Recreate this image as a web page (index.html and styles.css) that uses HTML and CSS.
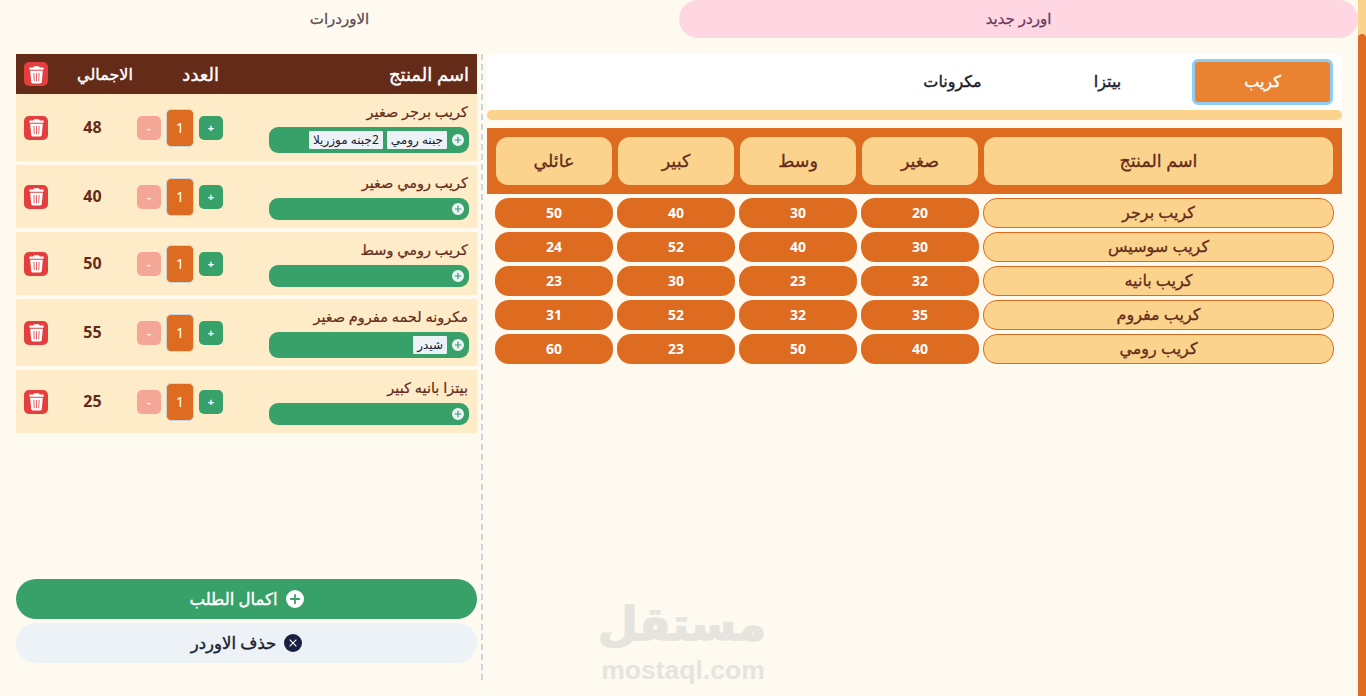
FILE: index.html
```html
<!DOCTYPE html>
<html lang="ar" dir="rtl">
<head>
<meta charset="utf-8">
<title>اوردر جديد</title>
<link rel="stylesheet" href="styles.css">
</head>
<body>
<svg class="defs" width="0" height="0" aria-hidden="true">
  <symbol id="plus" viewBox="0 0 24 24"><path fill="currentColor" fill-rule="evenodd" d="M12 0a12 12 0 1 1 0 24a12 12 0 0 1 0-24ZM10.800 5.500v5.300h-5.300v2.400h5.300v5.300h2.400v-5.300h5.300v-2.400h-5.300v-5.300Z"/></symbol>
  <symbol id="trash" viewBox="0 0 24 24"><path fill="#fff" fill-rule="evenodd" d="M9 1.500h6l1 1.800h5v2.700H3V3.300h5ZM4 7.200h16l-1.300 14.300A2 2 0 0 1 16.700 23.300H7.300a2 2 0 0 1-2-1.800ZM8.200 10l.4 10.500h1L9.300 10ZM11.500 10v10.500h1V10ZM14.700 10l-.3 10.500h1L15.800 10Z"/></symbol>
</svg>
<div class="page">
  <div class="content">
    <nav class="top-tabs">
      <div class="top-tab active">اوردر جديد</div>
      <div class="top-tab">الاوردرات</div>
    </nav>
    <main class="layout">
      <section class="menu">
        <div class="cats">
          <button class="cat selected">كريب</button>
          <button class="cat">بيتزا</button>
          <button class="cat">مكرونات</button>
        </div>
        <div class="strip"></div>
        <div class="thead">
          <div class="th">اسم المنتج</div><div class="th">صغير</div><div class="th">وسط</div><div class="th">كبير</div><div class="th">عائلي</div>
        </div>
        <div class="tbody">
          <div class="tr"><div class="td-name">كريب برجر</div><div class="td">20</div><div class="td">30</div><div class="td">40</div><div class="td">50</div></div>
          <div class="tr"><div class="td-name">كريب سوسيس</div><div class="td">30</div><div class="td">40</div><div class="td">52</div><div class="td">24</div></div>
          <div class="tr"><div class="td-name">كريب بانيه</div><div class="td">32</div><div class="td">23</div><div class="td">30</div><div class="td">23</div></div>
          <div class="tr"><div class="td-name">كريب مفروم</div><div class="td">35</div><div class="td">32</div><div class="td">52</div><div class="td">31</div></div>
          <div class="tr"><div class="td-name">كريب رومي</div><div class="td">40</div><div class="td">50</div><div class="td">23</div><div class="td">60</div></div>
        </div>
      </section>
      <div class="divider"></div>
      <aside class="cart">
        <div class="cart-list">
          <div class="cart-head">
            <div class="col-name">اسم المنتج</div>
            <div class="col-qty">العدد</div>
            <div class="col-total">الاجمالي</div>
            <div class="col-del"><span class="trash"><svg><use href="#trash"/></svg></span></div>
          </div>
          <div class="cart-row">
            <div class="col-name"><div class="item-name">كريب برجر صغير</div>
              <div class="extras"><svg class="add"><use href="#plus"/></svg><span class="tag">جبنه رومي</span><span class="tag">2جبنه موزريلا</span></div></div>
            <div class="col-qty"><span class="step inc">+</span><span class="qty">1</span><span class="step dec">-</span></div>
            <div class="col-total">48</div>
            <div class="col-del"><span class="trash"><svg><use href="#trash"/></svg></span></div>
          </div>
          <div class="cart-row">
            <div class="col-name"><div class="item-name">كريب رومي صغير</div>
              <div class="extras"><svg class="add"><use href="#plus"/></svg></div></div>
            <div class="col-qty"><span class="step inc">+</span><span class="qty">1</span><span class="step dec">-</span></div>
            <div class="col-total">40</div>
            <div class="col-del"><span class="trash"><svg><use href="#trash"/></svg></span></div>
          </div>
          <div class="cart-row">
            <div class="col-name"><div class="item-name">كريب رومي وسط</div>
              <div class="extras"><svg class="add"><use href="#plus"/></svg></div></div>
            <div class="col-qty"><span class="step inc">+</span><span class="qty">1</span><span class="step dec">-</span></div>
            <div class="col-total">50</div>
            <div class="col-del"><span class="trash"><svg><use href="#trash"/></svg></span></div>
          </div>
          <div class="cart-row">
            <div class="col-name"><div class="item-name">مكرونه لحمه مفروم صغير</div>
              <div class="extras"><svg class="add"><use href="#plus"/></svg><span class="tag">شيدر</span></div></div>
            <div class="col-qty"><span class="step inc">+</span><span class="qty">1</span><span class="step dec">-</span></div>
            <div class="col-total">55</div>
            <div class="col-del"><span class="trash"><svg><use href="#trash"/></svg></span></div>
          </div>
          <div class="cart-row">
            <div class="col-name"><div class="item-name">بيتزا بانيه كبير</div>
              <div class="extras"><svg class="add"><use href="#plus"/></svg></div></div>
            <div class="col-qty"><span class="step inc">+</span><span class="qty">1</span><span class="step dec">-</span></div>
            <div class="col-total">25</div>
            <div class="col-del"><span class="trash"><svg><use href="#trash"/></svg></span></div>
          </div>
        </div>
        <div class="actions">
          <button class="action primary"><svg class="action-icon"><use href="#plus"/></svg>اكمال الطلب</button>
          <button class="action secondary"><svg class="action-icon" viewBox="0 0 24 24"><circle cx="12" cy="12" r="12" fill="#1a2042"/><path d="M7.500 7.500l9 9M16.500 7.500l-9 9" stroke="#fff" stroke-width="1.500" fill="none"/></svg>حذف الاوردر</button>
        </div>
      </aside>
    </main>
  </div>
  <div class="scrollbar"><div class="thumb"></div></div>
</div>
<div class="watermark"><div class="wm-ar">مستقل</div><div class="wm-en">mostaql.com</div></div>
</body>
</html>
```
FILE: styles.css
```css
* { box-sizing: border-box; }
html, body { margin: 0; height: 696px; overflow: hidden; }
body { background: #fffaf0; font-family: "Noto Sans", "DejaVu Sans", sans-serif; color: #652b19; }
button { font: inherit; border: 0; padding: 0; }
.defs { position: absolute; }
.page { display: flex; flex-direction: row-reverse; height: 696px; }
.content { flex: 1; min-width: 0; }
.scrollbar { width: 8px; background: #fbd38d; padding-top: 34px; height: 696px; flex: none; }
.thumb { height: 100%; background: #dd6b20; border-radius: 4px 4px 0 0; }
.top-tabs { display: flex; height: 38px; }
.top-tab { flex: 1; display: flex; align-items: center; justify-content: center; font-size: 15px; padding-bottom: 2px; color: #5f4b57; -webkit-text-stroke: .3px currentColor; }
.top-tab.active { background: #fed7e2; color: #6b3a5a; border-radius: 20px; }
.layout { display: flex; padding: 16px 16px 0; height: 642px; }
.menu { width: 855px; flex: none; }
.cats { height: 56px; background: #fff; border-radius: 8px 8px 0 0; display: flex; align-items: center; padding: 0 9px; }
.cat { width: 141px; height: 46px; margin-left: 14px; padding-bottom: 2px; background: none; font-size: 16px; color: #1a202c; border-radius: 6px; -webkit-text-stroke: .4px currentColor; }
.cat.selected { background: #e98331; color: #fff; border: 3px solid #90cdf4; }
.strip { height: 10px; background: #fbd38d; border-radius: 5px; margin-bottom: 8px; }
.thead { height: 66px; background: #dd6b20; display: grid; grid-template-columns: 349px repeat(4, 116px); gap: 6px; padding: 9px; }
.th { background: #fbd38d; border-radius: 12px; display: flex; align-items: center; justify-content: center; padding-bottom: 2px; font-size: 17.500px; color: #652b19; -webkit-text-stroke: .3px currentColor; }
.tbody { display: flex; flex-direction: column; gap: 4px; padding: 4px 8px 0; }
.tr { display: grid; grid-template-columns: 351px repeat(4, 118px); gap: 4px; height: 30px; }
.td-name { background: #fbd38d; border: 1px solid #dd6b20; border-radius: 14px; display: flex; align-items: center; justify-content: center; padding-bottom: 2px; font-size: 16px; color: #652b19; -webkit-text-stroke: .3px currentColor; }
.td { background: #dd6b20; color: #fff; border-radius: 14px; display: flex; align-items: center; justify-content: center; padding-bottom: 1px; font-size: 14px; font-weight: 700; }
.divider { border-right: 2px dashed #cbd5e0; margin: 0 4px; flex: none; width: 2px; }
.cart { width: 461px; flex: none; height: 609px; display: flex; flex-direction: column; justify-content: space-between; }
.cart-list { display: flex; flex-direction: column; gap: 4px; }
.cart-head, .cart-row { display: grid; grid-template-columns: 200px 132px 89px 24px; align-items: center; padding: 0 8px; }
.cart-head { height: 40px; background: #652b19; color: #fff; font-size: 18px; -webkit-text-stroke: .4px currentColor; margin-bottom: -4px; }
.cart-row { background: #feebc8; padding-top: 8px; padding-bottom: 8px; }
.col-name { min-width: 0; }
.cart-head .col-qty { padding-right: 50px; }
.cart-row .col-qty { display: flex; align-items: center; gap: 5px; padding-right: 46px; }
.col-total { text-align: center; }
.cart-head .col-total { padding-left: 25px; white-space: nowrap; font-size: 16px; }
.cart-row .col-total { font-size: 16px; font-weight: 700; color: #652b19; padding-bottom: 1px; }
.col-del { display: flex; }
.trash { width: 24px; height: 24px; background: #e53e3e; border-radius: 5px; display: flex; align-items: center; justify-content: center; }
.trash svg { width: 19px; height: 19px; }
.item-name { height: 20px; line-height: 18px; font-size: 14.500px; color: #652b19; margin-bottom: 5px; -webkit-text-stroke: .2px currentColor; padding-right: 1px; }
.extras { background: #38a169; border-radius: 9px; min-height: 22px; width: 200px; display: flex; align-items: center; gap: 4px; padding: 4px 5px; }
.add { width: 12px; height: 12px; color: #edf2f7; flex: none; margin-left: 1px; }
.tag { background: #edf2f7; color: #1a202c; font-size: 12px; height: 18px; line-height: 18px; padding: 0 4px; border-radius: 1px; white-space: nowrap; }
.step { width: 24px; height: 24px; border-radius: 5px; display: flex; align-items: center; justify-content: center; color: #fff; font-size: 11px; font-weight: 700; }
.inc { background: #38a169; }
.dec { background: #f4a796; }
.qty { width: 28px; height: 38px; background: #dd6b20; color: #fff; border: 1px solid #cbd5e0; border-radius: 5px; display: flex; align-items: center; justify-content: center; font-size: 14px; }
.actions { display: flex; flex-direction: column; gap: 4px; }
.action { height: 40px; border-radius: 20px; display: flex; align-items: center; justify-content: center; gap: 8px; padding-bottom: 2px; font-size: 16.500px; -webkit-text-stroke: .4px currentColor; }
.primary { background: #38a169; color: #fff; }
.secondary { background: #edf2f7; color: #1a202c; }
.action-icon { width: 18px; height: 18px; color: #fff; -webkit-text-stroke: 0; margin-top: 2px; }
.watermark { position: absolute; left: 600px; top: 596px; width: 166px; text-align: center; color: #e6e4de; pointer-events: none; }
.wm-ar { font-family: "DejaVu Sans", sans-serif; font-size: 46px; font-weight: 700; line-height: 56px; height: 56px; white-space: nowrap; -webkit-text-stroke: 1.500px currentColor; }
.wm-en { font-family: "Liberation Sans", sans-serif; font-size: 26.500px; font-weight: 700; line-height: 26px; margin-top: 5px; direction: ltr; }
```
